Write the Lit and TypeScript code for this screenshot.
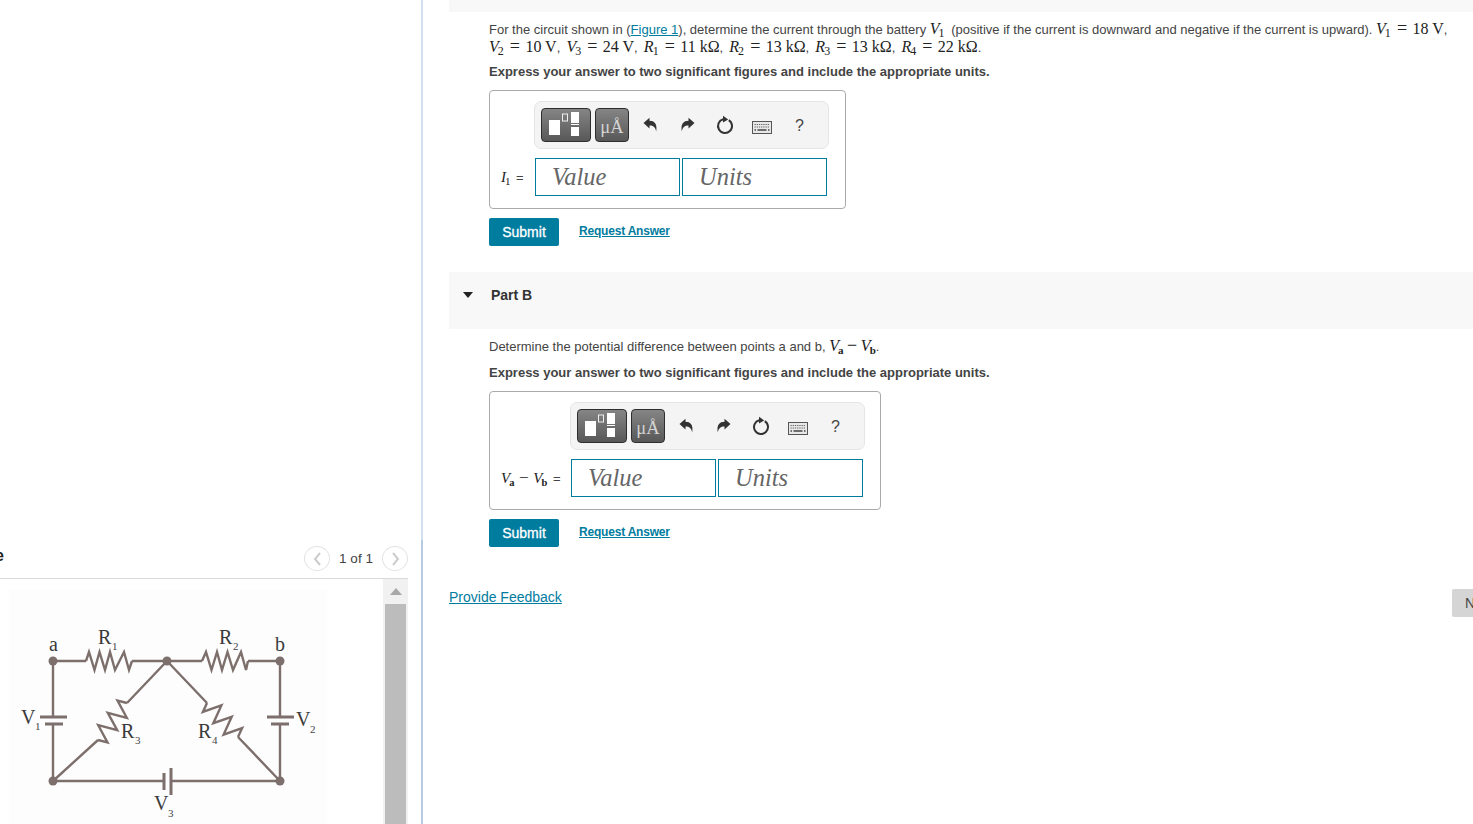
import { LitElement, html, css, svg } from "lit";
import { customElement } from "lit/decorators.js";

const v = (base: string, sub: string, upright = false) => html`<span class="mi">${base}</span><span class="sub ${upright ? "up" : ""}">${sub}</span>`;
const eq = (val: string, tail = ",") => html`<span class="mn"><span class="op">=</span>${val}</span><span class="tail">${tail}</span>`;

type P = [number, number];
function zig(a: P, b: P, n: number, amp: number): string {
  const dx = b[0] - a[0], dy = b[1] - a[1];
  const len = Math.hypot(dx, dy);
  const nx = -dy / len, ny = dx / len;
  const pts: string[] = [`${a[0]},${a[1]}`];
  for (let i = 0; i < n; i++) {
    const t = (i + 0.5) / n;
    const s = i % 2 === 0 ? 1 : -1;
    pts.push(`${(a[0] + dx * t + nx * amp * s).toFixed(1)},${(a[1] + dy * t + ny * amp * s).toFixed(1)}`);
  }
  pts.push(`${b[0]},${b[1]}`);
  return pts.join(" ");
}

const label = (x: number, y: number, t: string, sx?: number, sy?: number, s?: string) => svg`
  <text class="lb" x=${x} y=${y}>${t}</text>
  ${s ? svg`<text class="ls" x=${sx} y=${sy}>${s}</text>` : ""}`;

@customElement("app-root")
export class AppRoot extends LitElement {
  static styles = css`
    :host { display: block; width: 1473px; height: 824px; overflow: hidden; background: #fff; font-family: "Liberation Sans", Arial, sans-serif; color: #333; }
    * { box-sizing: border-box; }
    .page { display: flex; height: 824px; }
    .left { width: 421px; flex: none; display: flex; flex-direction: column; padding-top: 546px; overflow: hidden; }
    .divider { width: 2px; flex: none; background: linear-gradient(to bottom, #d3e1ee 0, #d3e1ee 540px, #b4cbe2 540px); }
    .fighead { display: flex; align-items: flex-start; height: 33px; width: 408px; border-bottom: 1px solid #d9d9d9; }
    .figtitle { font-weight: bold; font-size: 16px; margin-left: -45px; flex: 1; color: #222; line-height: 18px; margin-top: 1px; }
    .circ { width: 26px; height: 25px; border: 1px solid #e2e2e2; border-radius: 50%; display: flex; align-items: center; justify-content: center; background: #fff; flex: none; }
    .of { font-size: 13.5px; width: 52px; text-align: center; color: #444; line-height: 16px; margin-top: 5px; flex: none; }
    .figbody { flex: 1; display: flex; width: 408px; min-height: 0; }
    .fig { flex: none; display: block; width: 383px; height: 245px; }
    .lb { font-family: "Liberation Serif", serif; font-size: 20px; fill: #3a3a3a; }
    .ls { font-family: "Liberation Serif", serif; font-size: 11px; fill: #444; }
    .scroll { width: 25px; flex: none; background: #f1f1f1; display: flex; flex-direction: column; align-items: center; padding: 0 2px; }
    .up-arrow { height: 25px; flex: none; display: flex; align-items: center; justify-content: center; }
    .thumb { flex: 1; width: 21px; background: #bcbcbc; }

    .right { flex: 1; min-width: 0; padding-left: 26px; overflow: hidden; }
    .band-top { height: 12px; background: #f8f8f8; }
    .part { padding-left: 40px; }
    .prob { font-size: 13px; line-height: 17px; margin: 8px 0 0; color: #444; white-space: nowrap; }
    .prob.one { margin-top: 8px; margin-bottom: 10px; }
    .prob a, .fb { color: #007c9f; text-decoration: underline; }
    .gap { margin-right: 3px; }
    .tail { margin-right: 2.5px; }
    .mi { font-family: "Liberation Serif", serif; font-style: italic; font-size: 16px; color: #222; }
    .mn { font-family: "Liberation Serif", serif; font-size: 16px; color: #222; }
    .minus { font-size: 18px; }
    .op { display: inline-block; font-size: 18px; width: 13px; text-align: center; margin: 0 4px 0 1px; line-height: 0; }
    .sub { font-family: "Liberation Serif", serif; font-size: 12px; vertical-align: -3px; line-height: 0; margin-left: -1px; color: #222; }
    .sub.up { font-weight: bold; font-size: 11px; }
    .ask { font-size: 13px; font-weight: bold; line-height: 16px; margin: 8px 0 0; color: #444; }
    .box { margin-top: 10px; border: 1px solid #aaa; border-radius: 4px; padding: 10px 16px 12px 11px; display: grid; grid-template-columns: auto auto; column-gap: 8px; row-gap: 9px; width: max-content; }
    .box.wide { padding-right: 15px; }
    .toolbar { grid-column: 2; width: 295px; height: 48px; background: #f4f4f4; border: 1px solid #e5e5e5; border-radius: 7px; display: flex; align-items: center; padding-left: 6px; }
    .tb { height: 34px; border: 1px solid #2e2e2e; border-radius: 4px; background: linear-gradient(#858585, #585858); display: flex; align-items: center; justify-content: center; flex: none; }
    .tb.tpl { width: 50px; margin-right: 4px; }
    .tb.unit { width: 34px; font-family: "Liberation Serif", serif; font-size: 18.5px; color: #d4d4d4; padding-top: 5px; margin-right: 3px; }
    .ic { width: 37.2px; flex: none; display: flex; justify-content: center; align-items: center; }
    .ic.kb { padding-top: 4px; }
    .q { font-size: 16px; color: #444; padding-top: 1px; }
    .lab { font-size: 13px; align-self: center; white-space: nowrap; color: #444; }
    .lab .mi, .lab .mn { font-size: 15px; }
    .lab .minus { font-size: 17px; margin: 0 1px; }
    .lab .sub { font-size: 11px; }
    .lab .sub.up { font-size: 10.5px; }
    .lab .eqs { margin-left: 2px; }
    .lab.a { width: 25px; }
    .lab.b { width: 61px; }
    .inputs { display: flex; gap: 2px; padding-left: 1px; }
    input { width: 145px; height: 38px; border: 1px solid #007c9f; border-radius: 0; outline: none; background: #fff; padding: 0 0 0 16px; font-family: "Liberation Serif", serif; font-style: italic; font-size: 24.5px; }
    input::placeholder { color: #666; opacity: 1; }
    .actions { display: flex; align-items: center; margin-top: 9px; gap: 20px; }
    .submit { width: 70px; height: 28px; background: #007c9f; border: none; border-radius: 2px; color: #fff; font-family: inherit; font-size: 14px; -webkit-text-stroke: 0.3px #fff; padding: 0; }
    .req { font-size: 12px; letter-spacing: -0.2px; font-weight: bold; color: #007c9f; text-decoration: underline; margin-bottom: 2px; }
    .band { margin-top: 26px; height: 57px; background: #f8f8f8; display: flex; align-items: flex-start; padding: 14px 0 0 14px; }
    .tri { width: 0; height: 0; border-left: 5.5px solid transparent; border-right: 5.5px solid transparent; border-top: 6px solid #222; margin-top: 6px; margin-right: 18px; }
    .pname { font-size: 14px; font-weight: bold; line-height: 18px; color: #333; }
    .foot { display: flex; justify-content: space-between; align-items: flex-start; margin-top: 42px; margin-right: -10px; }
    .fb { font-size: 14px; line-height: 16px; }
    .next { width: 31px; height: 28px; background: #d5d5d5; border-radius: 2px; font-size: 14px; line-height: 28px; padding-left: 13px; color: #444; overflow: hidden; flex: none; }
  `;

  private undo(flip: boolean) {
    return html`<div class="ic"><svg width="15" height="16" viewBox="0 0 15 16" style=${flip ? "transform:scaleX(-1)" : ""}>
      <path fill="#333" d="M0.5 6 L6.5 0.8 V3.8 C11.5 3.8 14.5 7 13.2 14.5 C12.4 10.5 10.5 8.6 6.5 8.6 V11.4 Z"/></svg></div>`;
  }

  private toolbar() {
    return html`<div class="toolbar">
      <div class="tb tpl"><svg width="34" height="26" viewBox="0 0 34 26">
        <rect x="0" y="8" width="11" height="15" fill="#fff"/>
        <rect x="13.5" y="2" width="5" height="7" fill="none" stroke="#eee"/>
        <rect x="22" y="0" width="8" height="11" fill="#fff"/>
        <rect x="22" y="12" width="8" height="1" fill="#fff"/>
        <rect x="22" y="15" width="8" height="9" fill="#fff"/>
      </svg></div>
      <div class="tb unit">μÅ</div>
      ${this.undo(false)}
      ${this.undo(true)}
      <div class="ic"><svg width="18" height="20" viewBox="0 0 18 20">
        <path d="M12.8 5.1 A7 7 0 1 1 7 4.3" fill="none" stroke="#333" stroke-width="2"/>
        <path d="M7 0.8 L12.2 4.4 L7 7.6 Z" fill="#333"/></svg></div>
      <div class="ic kb"><svg width="20" height="13" viewBox="0 0 20 13">
        <rect x="0.5" y="0.5" width="19" height="12" fill="#e8e8e8" stroke="#555"/>
        <path d="M2.5 3.5 H17.5 M2.5 6 H17.5" stroke="#666" stroke-width="1.2" stroke-dasharray="1.3 0.9"/>
        <path d="M2.5 9 H4 M5.5 9 H14.5 M16 9 H17.5" stroke="#444" stroke-width="1.4"/></svg></div>
      <div class="ic q">?</div>
    </div>`;
  }

  private answer(lab: unknown, cls: string) {
    return html`<div class="box ${cls === "b" ? "wide" : ""}">
      ${this.toolbar()}
      <div class="lab ${cls}">${lab}<span class="eqs"> =</span></div>
      <div class="inputs"><input placeholder="Value"><input placeholder="Units"></div>
    </div>
    <div class="actions"><button class="submit">Submit</button><a class="req">Request Answer</a></div>`;
  }

  private circuit() {
    return html`<svg class="fig" viewBox="0 579 383 245">
      <rect x="9" y="590" width="318" height="234" fill="#fdfdfe"/>
      <g fill="none" stroke="#7d6f6c" stroke-width="2.4" stroke-linejoin="miter">
        <path d="M53 661 H86 M132 661 H202 M248 661 H280 V717 M280 724 V781 M53 661 V717 M53 724 V781 M53 781 H164 M171 781 H280"/>
        <path d="M167 661 L127 703 M98 740 L53 781 M167 661 L207 703 M238 737 L280 781"/>
        <polyline points="86,661 89,652 94.5,670 99.5,652 105,670 110,652 115,670 124,652 129,670 132,661"/>
        <polyline points="202,661 206,652 211.5,670 217,652 222,670 227.5,652 233,670 241,652 246,670 248,661"/>
        <polyline points=${zig([127, 703], [98, 740], 6, 9)}/>
        <polyline points=${zig([207, 703], [238, 737], 6, 9)}/>
      </g>
      <g stroke="#7d6f6c" stroke-width="3" fill="none">
        <path d="M40 717 H67 M45 724 H63 M267 717 H294 M271 724 H289 M171 768 V795 M164 773 V790"/>
      </g>
      <g fill="#7d6f6c">
        <circle cx="53" cy="661" r="4.5"/><circle cx="167" cy="661" r="4.5"/><circle cx="280" cy="661" r="4.5"/>
        <circle cx="53" cy="781" r="4.5"/><circle cx="280" cy="781" r="4.5"/>
      </g>
      ${label(49, 651, "a")}
      ${label(275, 651, "b")}
      ${label(98, 644, "R", 112, 650, "1")}
      ${label(219, 644, "R", 233, 650, "2")}
      ${label(21, 724, "V", 35, 730, "1")}
      ${label(296, 726, "V", 310, 733, "2")}
      ${label(121, 738, "R", 135, 744, "3")}
      ${label(198, 738, "R", 212, 744, "4")}
      ${label(154, 810, "V", 168, 817, "3")}
    </svg>`;
  }

  render() {
    const chev = (d: string) => html`<svg width="9" height="14" viewBox="0 0 9 14"><path d=${d} fill="none" stroke="#ccc" stroke-width="2"/></svg>`;
    return html`<div class="page">
      <div class="left">
        <div class="fighead">
          <div class="figtitle">Figure</div>
          <div class="circ">${chev("M7 1 L2 7 L7 13")}</div>
          <div class="of">1 of 1</div>
          <div class="circ">${chev("M2 1 L7 7 L2 13")}</div>
        </div>
        <div class="figbody">
          ${this.circuit()}
          <div class="scroll">
            <div class="up-arrow"><svg width="12" height="7" viewBox="0 0 12 7"><path d="M6 0 L12 7 H0 Z" fill="#a8a8a8"/></svg></div>
            <div class="thumb"></div>
          </div>
        </div>
      </div>
      <div class="divider"></div>
      <div class="right">
        <div class="band-top"></div>
        <div class="part">
          <p class="prob">For the circuit shown in (<a>Figure 1</a>), determine the current through the battery <span class="gap">${v("V", "1")}</span> (positive if the current is downward and negative if the current is upward). ${v("V", "1")} ${eq("18 V")}<br>${v("V", "2")} ${eq("10 V")} ${v("V", "3")} ${eq("24 V")} ${v("R", "1")} ${eq("11 kΩ")} ${v("R", "2")} ${eq("13 kΩ")} ${v("R", "3")} ${eq("13 kΩ")} ${v("R", "4")} ${eq("22 kΩ", ".")}</p>
          <p class="ask">Express your answer to two significant figures and include the appropriate units.</p>
          ${this.answer(v("I", "1"), "a")}
        </div>
        <div class="band"><div class="tri"></div><div class="pname">Part B</div></div>
        <div class="part">
          <p class="prob one">Determine the potential difference between points a and b, ${v("V", "a", true)} <span class="mn minus">−</span> ${v("V", "b", true)}.</p>
          <p class="ask">Express your answer to two significant figures and include the appropriate units.</p>
          ${this.answer(html`${v("V", "a", true)} <span class="mn minus">−</span> ${v("V", "b", true)}`, "b")}
        </div>
        <div class="foot"><a class="fb">Provide Feedback</a><div class="next">N</div></div>
      </div>
    </div>`;
  }
}
